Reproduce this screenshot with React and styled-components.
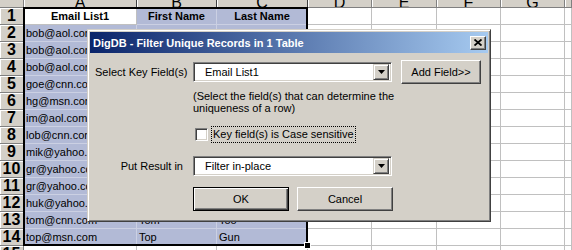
import React from "react";
import styled, { createGlobalStyle } from "styled-components";

const GlobalStyle = createGlobalStyle`
  html, body { margin: 0; padding: 0; background: #fff; }
  body { width: 572px; height: 250px; overflow: hidden; }
  * { box-sizing: border-box; }
`;

const Screen = styled.div`
  position: relative;
  width: 572px;
  height: 250px;
  overflow: hidden;
  background: #fff;
  font-family: "Liberation Sans", Arial, sans-serif;
`;

const Sheet = styled.div`
  display: grid;
  grid-template-columns: 24px 113px 80px 91px 64px 65px 64px 64px 1fr;
  grid-template-rows: 8px repeat(15, 17px);
`;

const Placed = styled.div`
  grid-row: ${(p) => p.$r};
  grid-column: ${(p) => p.$c};
`;

const Corner = styled(Placed)`
  background: #d4d0c8;
  border-right: 1px solid #808080;
  border-bottom: 1px solid #808080;
`;

const ColHeader = styled(Placed)`
  background: #d4d0c8;
  border-right: 1px solid ${(p) => (p.$sel ? "#404040" : "#808080")};
  border-bottom: 1px solid #808080;
  box-shadow: inset 1px 0 #fff;
  display: flex;
  justify-content: center;
  align-items: flex-end;
  overflow: hidden;
  font-size: 16px;
  line-height: 16px;
  color: #000;
  & > span { margin-bottom: -4px; }
`;

const RowHeader = styled(Placed)`
  background: #d4d0c8;
  border-right: 1px solid #808080;
  border-bottom: 1px solid #808080;
  box-shadow: inset 0 1px #fff, inset 1px 0 #fff;
  display: flex;
  justify-content: center;
  align-items: center;
  font-size: 16px;
  font-weight: bold;
  line-height: 16px;
  color: #000;
  overflow: hidden;
`;

const Cell = styled(Placed)`
  background: ${(p) => (p.$sel ? "#b2bad6" : "#fff")};
  border-right: 1px solid ${(p) => (p.$sel ? "#cbd0e3" : "#c0c0c0")};
  border-bottom: 1px solid ${(p) => (p.$sel ? "#cbd0e3" : "#c0c0c0")};
  display: flex;
  align-items: flex-end;
  justify-content: ${(p) => (p.$center ? "center" : "flex-start")};
  padding: 0 2px 2px 2px;
  font-size: 11px;
  line-height: 12px;
  font-weight: ${(p) => (p.$bold ? "bold" : "normal")};
  color: #000;
  white-space: nowrap;
  overflow: hidden;
`;

const Selection = styled.div`
  grid-column: 2 / 5;
  grid-row: 2 / 16;
  border: 2px solid #000;
  margin: -1px 0 0 -1px;
  position: relative;
  pointer-events: none;
  z-index: 2;
`;

const FillHandle = styled.div`
  position: absolute;
  right: -4px;
  bottom: -4px;
  width: 5px;
  height: 5px;
  background: #000;
  outline: 1px solid #fff;
`;

/* ---------- Dialog ---------- */

const Dialog = styled.div`
  position: absolute;
  left: 87px;
  top: 29px;
  width: 404px;
  height: 193px;
  background: #d4d0c8;
  border-top: 1px solid #d4d0c8;
  border-left: 1px solid #d4d0c8;
  border-right: 1px solid #404040;
  border-bottom: 1px solid #404040;
  box-shadow: inset 1px 1px #fff, inset -1px -1px #808080;
  padding: 2px;
  z-index: 5;
  display: flex;
  flex-direction: column;
  font-family: "Liberation Sans", Arial, sans-serif;
  font-size: 11px;
  color: #000;
`;

const TitleBar = styled.div`
  height: 21px;
  background: linear-gradient(to right, #0a246a, #a6caf0);
  display: flex;
  align-items: center;
  justify-content: space-between;
  padding: 0 2px 0 3px;
`;

const Title = styled.span`
  color: #fff;
  font-weight: bold;
  font-size: 11px;
`;

const CloseButton = styled.div`
  width: 16px;
  height: 14px;
  background: #d4d0c8;
  border-top: 1px solid #fff;
  border-left: 1px solid #fff;
  border-right: 1px solid #404040;
  border-bottom: 1px solid #404040;
  box-shadow: inset -1px -1px #808080;
  display: flex;
  align-items: center;
  justify-content: center;
`;

const Body = styled.div`
  padding: 7px 0 0 5px;
  display: flex;
  flex-direction: column;
`;

const FormRow = styled.div`
  display: grid;
  grid-template-columns: 89px 199px 80px;
  column-gap: 9px;
  align-items: center;
  margin-top: ${(p) => p.$mt || 0}px;
  min-height: ${(p) => p.$h || 0}px;
`;

const Label = styled.div`
  grid-column: 1;
  text-align: ${(p) => (p.$right ? "right" : "left")};
  padding-right: ${(p) => (p.$right ? 1 : 0)}px;
  white-space: nowrap;
`;

const ComboBox = styled.div`
  grid-column: 2;
  height: 20px;
  background: #fff;
  border-top: 1px solid #808080;
  border-left: 1px solid #808080;
  border-right: 1px solid #fff;
  border-bottom: 1px solid #fff;
  box-shadow: inset 1px 1px #404040, inset -1px -1px #d4d0c8;
  padding: 2px;
  display: flex;
  align-items: center;
`;

const ComboText = styled.span`
  flex: 1;
  padding-left: 9px;
  white-space: nowrap;
`;

const DropButton = styled.div`
  width: 16px;
  height: 16px;
  background: #d4d0c8;
  border-top: 1px solid #d4d0c8;
  border-left: 1px solid #d4d0c8;
  border-right: 1px solid #404040;
  border-bottom: 1px solid #404040;
  box-shadow: inset 1px 1px #fff, inset -1px -1px #808080;
  display: flex;
  align-items: center;
  justify-content: center;
`;

const Button = styled.div`
  height: 24px;
  width: ${(p) => p.$w || 80}px;
  background: #d4d0c8;
  display: flex;
  align-items: center;
  justify-content: center;
  white-space: nowrap;
  ${(p) =>
    p.$default
      ? `border: 1px solid #000;
         box-shadow: inset 1px 1px #fff, inset -1px -1px #404040, inset -2px -2px #808080;`
      : `border-top: 1px solid #fff;
         border-left: 1px solid #fff;
         border-right: 1px solid #404040;
         border-bottom: 1px solid #404040;
         box-shadow: inset -1px -1px #808080;`}
`;

const Help = styled.div`
  grid-column: 2 / 4;
  line-height: 12px;
  white-space: nowrap;
`;

const CheckLine = styled.div`
  grid-column: 2 / 4;
  display: flex;
  align-items: center;
  padding-left: 2px;
`;

const CheckBox = styled.div`
  width: 13px;
  height: 13px;
  background: #fff;
  border-top: 1px solid #808080;
  border-left: 1px solid #808080;
  border-right: 1px solid #fff;
  border-bottom: 1px solid #fff;
  box-shadow: inset 1px 1px #404040, inset -1px -1px #d4d0c8;
`;

const FocusLabel = styled.span`
  margin-left: 3px;
  border: 1px dotted #000;
  padding: 1px;
  line-height: 13px;
  white-space: nowrap;
`;

const ButtonRow = styled.div`
  grid-column: 2 / 4;
  display: flex;
  gap: 8px;
`;

const COLS = ["A", "B", "C", "D", "E", "F", "G", "H"];

const DATA = {
  1: ["Email List1", "First Name", "Last Name"],
  2: ["bob@aol.com", "Bob", "Williams"],
  3: ["bob@aol.com", "Bob", "Williams"],
  4: ["bob@aol.com", "Bob", "Williams"],
  5: ["goe@cnn.com", "Goe", "Smith"],
  6: ["hg@msn.com", "Hg", "Lee"],
  7: ["im@aol.com", "Im", "Kim"],
  8: ["lob@cnn.com", "Lob", "Brown"],
  9: ["mik@yahoo.com", "Mik", "Jones"],
  10: ["gr@yahoo.com", "Gr", "White"],
  11: ["gr@yahoo.com", "Gr", "White"],
  12: ["huk@yahoo.com", "Huk", "Green"],
  13: ["tom@cnn.com", "Tom", "Too"],
  14: ["top@msn.com", "Top", "Gun"],
};

function Arrow() {
  return (
    <svg width="7" height="4" viewBox="0 0 7 4">
      <polygon points="0,0 7,0 3.5,4" fill="#000" />
    </svg>
  );
}

function CloseGlyph() {
  return (
    <svg width="8" height="7" viewBox="0 0 8 7">
      <path d="M0.5 0.5 L7.5 6.5 M7.5 0.5 L0.5 6.5" stroke="#000" strokeWidth="1.8" />
    </svg>
  );
}

export default function App() {
  const rows = Array.from({ length: 15 }, (_, i) => i + 1);
  return (
    <Screen>
      <GlobalStyle />
      <Sheet>
        <Corner $r={1} $c={1} />
        {COLS.map((c, i) => (
          <ColHeader key={c} $r={1} $c={i + 2} $sel={i < 3}>
            <span>{c === "H" ? "" : c}</span>
          </ColHeader>
        ))}
        {rows.map((r) => (
          <React.Fragment key={r}>
            <RowHeader $r={r + 1} $c={1}>
              {r}
            </RowHeader>
            {COLS.map((c, ci) => {
              const sel = r <= 14 && ci < 3 && !(r === 1 && ci === 0);
              const val = DATA[r] && ci < 3 ? DATA[r][ci] : "";
              return (
                <Cell
                  key={c}
                  $r={r + 1}
                  $c={ci + 2}
                  $sel={sel}
                  $bold={r === 1}
                  $center={r === 1}
                >
                  {val}
                </Cell>
              );
            })}
          </React.Fragment>
        ))}
        <Selection>
          <FillHandle />
        </Selection>
      </Sheet>

      <Dialog>
        <TitleBar>
          <Title>DigDB - Filter Unique Records in 1 Table</Title>
          <CloseButton>
            <CloseGlyph />
          </CloseButton>
        </TitleBar>
        <Body>
          <FormRow $h={24}>
            <Label>Select Key Field(s)</Label>
            <ComboBox>
              <ComboText>Email List1</ComboText>
              <DropButton>
                <Arrow />
              </DropButton>
            </ComboBox>
            <Button $w={80}>Add Field&gt;&gt;</Button>
          </FormRow>
          <FormRow $mt={6}>
            <Help>
              (Select the field(s) that can determine the
              <br />
              uniqueness of a row)
            </Help>
          </FormRow>
          <FormRow $mt={12}>
            <CheckLine>
              <CheckBox />
              <FocusLabel>Key field(s) is Case sensitive</FocusLabel>
            </CheckLine>
          </FormRow>
          <FormRow $mt={13}>
            <Label $right>Put Result in</Label>
            <ComboBox>
              <ComboText>Filter in-place</ComboText>
              <DropButton>
                <Arrow />
              </DropButton>
            </ComboBox>
          </FormRow>
          <FormRow $mt={11}>
            <ButtonRow>
              <Button $w={96} $default>
                OK
              </Button>
              <Button $w={96}>Cancel</Button>
            </ButtonRow>
          </FormRow>
        </Body>
      </Dialog>
    </Screen>
  );
}
